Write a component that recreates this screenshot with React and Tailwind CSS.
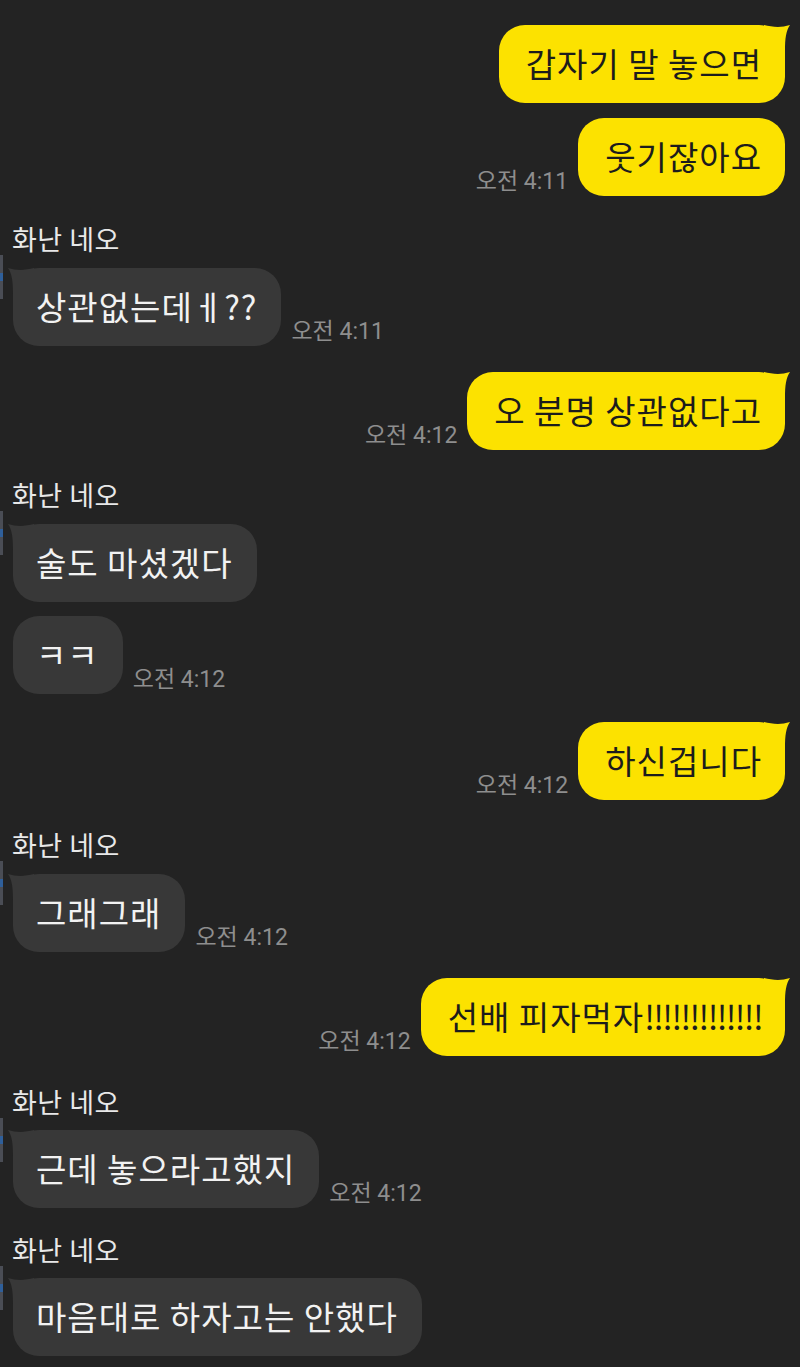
import React from 'react';

const font = { fontFamily: '"Noto Sans CJK KR", "Noto Sans", sans-serif' };

const TailRight = () => (
    <svg className="absolute top-0 -right-[5px]" width="26" height="26" viewBox="0 0 26 26">
        <path d="M0 0 C8 2 17 3 26 0 C22 6 21 13 21 26 H0 Z" fill="#fce200" />
    </svg>
);

const TailLeft = () => (
    <svg className="absolute top-0 -left-[5px]" width="26" height="26" viewBox="0 0 26 26">
        <path d="M26 0 C18 2 9 3 0 0 C4 6 5 13 5 26 H26 Z" fill="#383838" />
    </svg>
);

const Time = ({ t }) => (
    <span className="text-[23px] leading-none text-[#8e8e8e] pb-[3px] whitespace-nowrap" style={{ fontFamily: 'Roboto, "Noto Sans CJK KR", sans-serif' }}>{t}</span>
);

const Mine = ({ children, time, tail, mt }) => (
    <div className={`flex items-end justify-end gap-[10px] pr-[15px] ${mt}`}>
        {time && <Time t={time} />}
        <div className="relative h-[78px] flex items-center rounded-[26px] bg-[#fce200] pl-[27px] pr-[23px] text-[33px] tracking-[1px] text-[#1c1c1c] whitespace-nowrap">
            {tail && <TailRight />}
            <span className="relative">{children}</span>
        </div>
    </div>
);

const Theirs = ({ text, time, tail, mt }) => (
    <div className={`flex items-end gap-[10px] pl-[13px] ${mt}`}>
        <div className="relative h-[78px] flex items-center rounded-[26px] bg-[#383838] pl-[23px] pr-[24px] text-[33px] tracking-[1px] text-[#f2f2f2] whitespace-nowrap">
            {tail && <TailLeft />}
            <span className="relative">{text}</span>
        </div>
        {time && <Time t={time} />}
    </div>
);

const Name = ({ mt }) => (
    <div className={`relative pl-[12px] text-[27px] tracking-[0.5px] leading-[36px] text-[#e8e8e8] ${mt}`}>
        화난 네오
        <div className="absolute left-0 top-[34px] w-[3px] h-[44px] bg-[#4a4d55]">
            <div className="mt-[18px] h-[8px] bg-[#2f5f9a]" />
        </div>
    </div>
);

export default function App() {
    return (
        <div className="w-[800px] h-[1367px] bg-[#232323] overflow-hidden pt-[25px]" style={font}>
            <Mine tail>갑자기 말 놓으면</Mine>
            <Mine time="오전 4:11" mt="mt-[15px]">웃기잖아요</Mine>
            <Name mt="mt-[25px]" />
            <Theirs text="상관없는데ㅔ??" time="오전 4:11" tail mt="mt-[11px]" />
            <Mine time="오전 4:12" tail mt="mt-[26px]">오 분명 상관없다고</Mine>
            <Name mt="mt-[27px]" />
            <Theirs text="술도 마셨겠다" tail mt="mt-[11px]" />
            <Theirs text="ㅋㅋ" time="오전 4:12" mt="mt-[14px]" />
            <Mine time="오전 4:12" tail mt="mt-[28px]">하신겁니다</Mine>
            <Name mt="mt-[27px]" />
            <Theirs text="그래그래" time="오전 4:12" tail mt="mt-[11px]" />
            <Mine time="오전 4:12" tail mt="mt-[26px]">
                선배 피자먹자<span className="tracking-[-1.6px]">!!!!!!!!!!!!!</span>
            </Mine>
            <Name mt="mt-[28px]" />
            <Theirs text="근데 놓으라고했지" time="오전 4:12" tail mt="mt-[10px]" />
            <Name mt="mt-[24px]" />
            <Theirs text="마음대로 하자고는 안했다" tail mt="mt-[10px]" />
        </div>
    );
}
